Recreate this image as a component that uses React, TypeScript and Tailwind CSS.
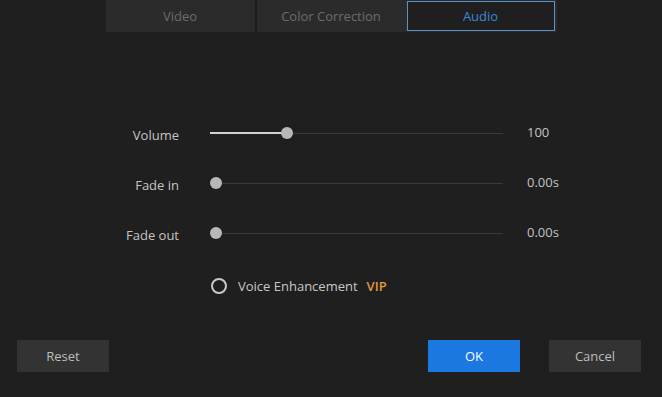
import React from "react";

function Slider({ pos }: { pos: number }) {
  return (
    <div className="relative h-[12px] w-[293px]">
      <div className="absolute left-0 right-0 top-[6px] h-px bg-[#3a3a3a]" />
      {pos > 0 && (
        <div className="absolute left-0 top-[5px] h-[2px] bg-[#d2d2d2]" style={{ width: pos + 6 }} />
      )}
      <div
        className="absolute top-0 h-[12px] w-[12px] rounded-full bg-[#b8b8b8]"
        style={{ left: pos }}
      />
    </div>
  );
}

function Row({ label, value, pos }: { label: string; value: string; pos: number }) {
  return (
    <div className="flex h-[50px] items-center">
      <div className="w-[179px] pt-[6px] text-right text-[13px] text-[#c4c4c4]">{label}</div>
      <div className="ml-[31px]">
        <Slider pos={pos} />
      </div>
      <div className="ml-[24px] text-[13px] text-[#c4c4c4]">{value}</div>
    </div>
  );
}

export default function App() {
  return (
    <div
      className="flex h-[397px] w-[662px] flex-col bg-[#1f1f1f]"
      style={{ fontFamily: '"Open Sans", "Noto Sans", sans-serif' }}
    >
      <div className="mx-auto flex h-[32px] w-[451px] bg-[#2b2b2b]">
        <div className="flex w-[149px] items-center justify-center pt-[2px] text-[13px] text-[#6c6c6c]">Video</div>
        <div className="w-[2px] bg-[#1c1c1c]" />
        <div className="flex w-[149px] items-center justify-center pt-[2px] text-[13px] text-[#6c6c6c]">
          Color Correction
        </div>
        <div className="w-px" />
        <div className="flex w-[150px] items-center justify-center py-px pr-[2px]">
          <div className="flex h-full w-full items-center justify-center border border-[#5a92c8] bg-[#1f1f1f] pt-[2px] text-[13px] text-[#3a8ad6]">
            Audio
          </div>
        </div>
      </div>

      <div className="mt-[76px] flex flex-col">
        <Row label="Volume" value="100" pos={71} />
        <Row label="Fade in" value="0.00s" pos={0} />
        <Row label="Fade out" value="0.00s" pos={0} />
      </div>

      <div className="mt-[14px] flex h-[28px] items-center pl-[211px]">
        <div className="h-[16px] w-[16px] rounded-full border-2 border-[#c8c8c8]" />
        <span className="ml-[11px] pt-px text-[13px] text-[#c8c8c8]">Voice Enhancement</span>
        <span className="ml-[9px] pt-px text-[13px] font-semibold text-[#e09a3c]">VIP</span>
      </div>

      <div className="mt-[40px] flex items-center justify-between pl-[17px] pr-[21px]">
        <button className="h-[32px] w-[92px] bg-[#333333] pt-[2px] text-[13px] text-[#bdbdbd]">Reset</button>
        <div className="flex gap-[29px]">
          <button className="h-[32px] w-[92px] bg-[#1a78e0] pt-[2px] text-[13px] text-white">OK</button>
          <button className="h-[32px] w-[92px] bg-[#333333] pt-[2px] text-[13px] text-[#bdbdbd]">Cancel</button>
        </div>
      </div>
    </div>
  );
}
